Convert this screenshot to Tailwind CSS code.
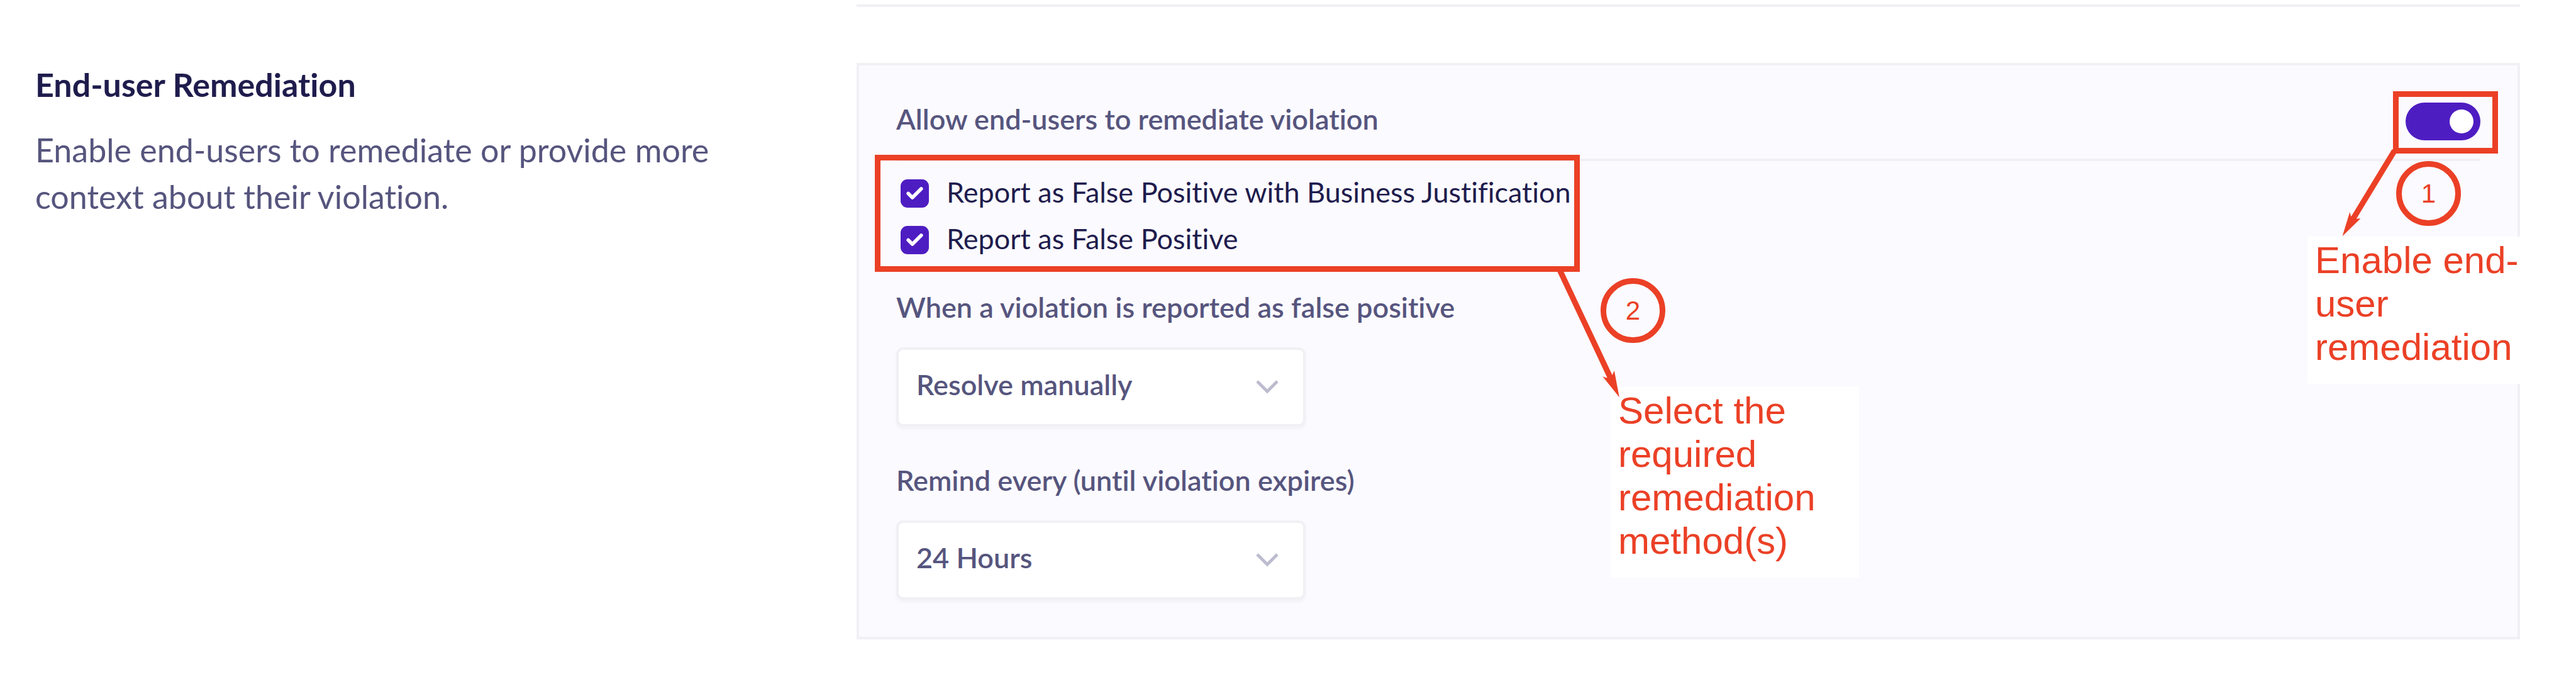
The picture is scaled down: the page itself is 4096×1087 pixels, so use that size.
<!DOCTYPE html>
<html lang="en">
<head>
<meta charset="utf-8">
<meta name="viewport" content="width=device-width, initial-scale=1">
<title>End-user Remediation</title>
<script src="https://cdn.jsdelivr.net/npm/@tailwindcss/browser@4"></script>
</head>
<body class="bg-white font-['Lato',sans-serif] text-[45px] leading-[56px] text-[#56557e] [font-variant-ligatures:none]">
<main class="flex min-h-screen pt-[7px] pr-[89px] pb-[70px]">
  <aside class="w-[1362px] shrink-0 pt-[90px] pr-[200px] pl-14 text-[52px] leading-[74px]">
    <h2 class="font-bold text-[#1f1c4d]">End-user Remediation</h2>
    <p class="mt-[30px]">Enable end-users to remediate or provide more context about their violation.</p>
  </aside>

  <div class="min-w-0 flex-1">
    <hr class="mb-[89px] border-t-4 border-[#f0f0f5]">

    <div class="relative">
      <section class="border-4 border-[#f0f0f5] bg-[#fbfaff] px-[59px] pb-[59px]">
        <div class="flex h-[152px] items-center justify-between border-b-4 border-[#f0f0f5] pt-[30px]">
          <label for="allow" class="pb-2 font-semibold">Allow end-users to remediate violation</label>
          <input id="allow" type="checkbox" role="switch" checked class="relative h-[60px] w-[119px] appearance-none rounded-full bg-[#4e1dc2] before:absolute before:top-[11px] before:right-[11px] before:size-[38px] before:rounded-full before:bg-white before:content-['']">
        </div>

        <div class="pt-[14px] pl-[7px] text-[#1f1c4d]">
          <div class="flex h-[74px] items-center gap-7">
            <span class="grid size-[45px] shrink-0">
              <input id="fp-just" type="checkbox" checked class="col-start-1 row-start-1 size-[45px] appearance-none rounded-[11px] bg-[#4e1dc2]">
              <svg class="pointer-events-none z-10 col-start-1 row-start-1 size-[45px]" viewBox="0 0 48 48" fill="none" stroke="#fff" stroke-width="6" stroke-linecap="round" stroke-linejoin="round" aria-hidden="true"><path d="M13 24l7 7L35 16"/></svg>
            </span>
            <label for="fp-just" class="pb-1">Report as False Positive with Business Justification</label>
          </div>
          <div class="flex h-[74px] items-center gap-7">
            <span class="grid size-[45px] shrink-0">
              <input id="fp" type="checkbox" checked class="col-start-1 row-start-1 size-[45px] appearance-none rounded-[11px] bg-[#4e1dc2]">
              <svg class="pointer-events-none z-10 col-start-1 row-start-1 size-[45px]" viewBox="0 0 48 48" fill="none" stroke="#fff" stroke-width="6" stroke-linecap="round" stroke-linejoin="round" aria-hidden="true"><path d="M13 24l7 7L35 16"/></svg>
            </span>
            <label for="fp" class="pb-1">Report as False Positive</label>
          </div>
        </div>

        <div class="mt-[42px] flex flex-col gap-9 font-semibold">
          <label for="when">When a violation is reported as false positive</label>
          <div class="relative w-[651px]">
            <select id="when" class="h-[126px] w-full appearance-none rounded-[11px] border-4 border-[#f0f0f5] bg-white pb-2 pl-7 shadow-[0_4px_4px_#f3f2f7]">
              <option>Resolve manually</option>
            </select>
            <svg class="pointer-events-none absolute top-[50px] right-[43px] h-6 w-9" viewBox="0 0 36 24" fill="none" stroke="#bdbccf" stroke-width="5" aria-hidden="true"><path d="M2 4l16 16L34 4"/></svg>
          </div>
        </div>

        <div class="mt-[57px] flex flex-col gap-9 font-semibold">
          <label for="remind">Remind every (until violation expires)</label>
          <div class="relative w-[651px]">
            <select id="remind" class="h-[126px] w-full appearance-none rounded-[11px] border-4 border-[#f0f0f5] bg-white pb-2 pl-7 shadow-[0_4px_4px_#f3f2f7]">
              <option>24 Hours</option>
            </select>
            <svg class="pointer-events-none absolute top-[50px] right-[43px] h-6 w-9" viewBox="0 0 36 24" fill="none" stroke="#bdbccf" stroke-width="5" aria-hidden="true"><path d="M2 4l16 16L34 4"/></svg>
          </div>
        </div>
      </section>

      <!-- Callouts laid over the panel -->
      <div class="pointer-events-none absolute inset-0 font-['Liberation_Sans',sans-serif] text-[60px] leading-[69px] text-[#eb4026]">
        <!-- Step 1 -->
        <div class="absolute top-[45px] right-[35px] h-[99px] w-[167px] border-[9px] border-[#eb4026]"></div>
        <p class="absolute top-[276px] right-[-4px] h-[234px] w-[342px] bg-white pt-[3px] pl-3">Enable end-user remediation</p>
        <svg class="absolute top-[135px] right-[192px] h-[145px] w-[100px]" viewBox="0 0 100 145" fill="#eb4026" aria-hidden="true"><path d="M92.5 4.3L27 112" stroke="#eb4026" stroke-width="9"/><path d="M9.6 140.3L21.3 102l1.8 6.4 8.7 4.2 6.6-.3z"/></svg>
        <div class="absolute top-[156px] right-[94px] grid size-[103px] place-items-center rounded-full border-[9px] border-[#eb4026] text-[42px]">1</div>

        <!-- Step 2 -->
        <div class="absolute top-[146px] left-[29px] h-[186px] w-[1121px] border-[9px] border-[#eb4026]"></div>
        <p class="absolute top-[515px] left-[1199px] h-[303px] w-[395px] bg-white pt-[3px] pl-3">Select the required remediation method(s)</p>
        <svg class="absolute top-[330px] left-[1110px] h-[205px] w-[110px]" viewBox="0 0 110 205" fill="#eb4026" aria-hidden="true"><path d="M8.5 0L88.5 170" stroke="#eb4026" stroke-width="9"/><path d="M102.8 201.2L76.2 168.3l6.2 2.3 9.3-4.6 3.1-7z"/></svg>
        <div class="absolute top-[342px] left-[1183px] grid size-[103px] place-items-center rounded-full border-[9px] border-[#eb4026] text-[42px]">2</div>
      </div>
    </div>
  </div>
</main>
</body>
</html>
